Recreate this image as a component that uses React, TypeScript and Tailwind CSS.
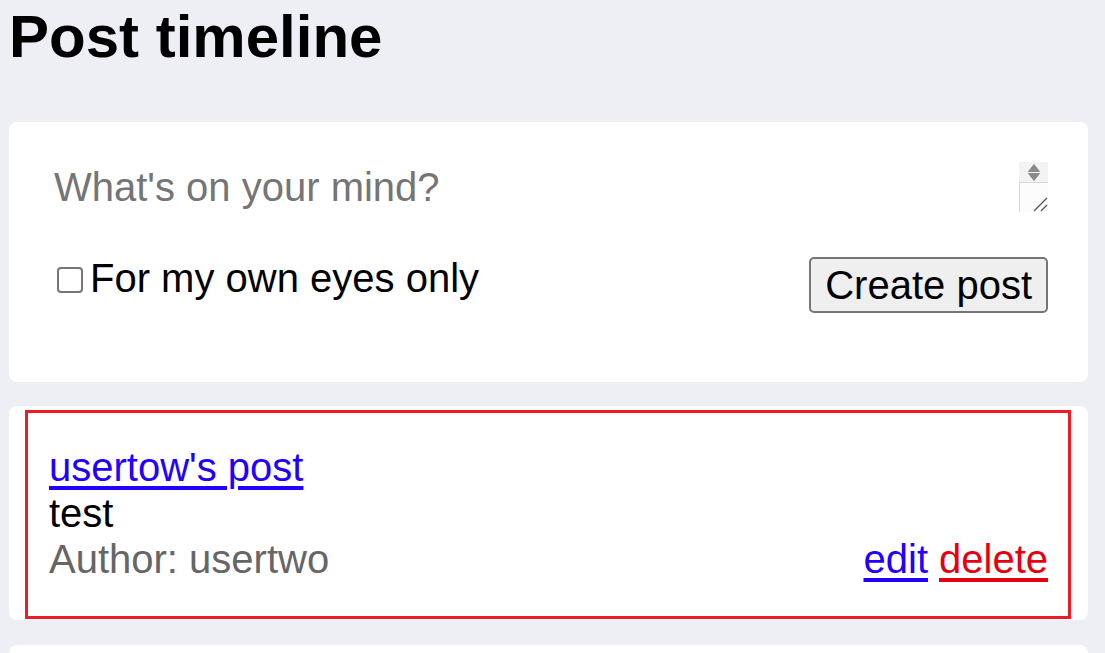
import React from "react";

export default function App() {
  const font = { fontFamily: '"Liberation Sans", Arial, sans-serif' };
  return (
    <div className="h-[653px] w-[1105px] overflow-hidden bg-[#eeeff4] text-black" style={font}>
      <h1 className="ml-[9px] h-[61px] pt-[7px] text-[60px] font-bold leading-none">Post timeline</h1>

      <div className="ml-[9px] mt-[61px] h-[260px] w-[1079px] rounded-[8px] bg-white px-[40px] pt-[40px]">
        <div className="relative h-[50px] w-full">
          <textarea
            placeholder="What's on your mind?"
            className="block h-[50px] w-full resize-none overflow-hidden border-0 bg-transparent px-[5px] pt-[2px] text-[40px] leading-[46px] text-black outline-none placeholder:text-[#757575]"
            style={font}
          />
          <div className="pointer-events-none absolute right-0 top-0 flex h-[50px] w-[29px] flex-col">
            <div className="flex h-[20px] flex-col items-center justify-center gap-[1px] bg-[#f3f3f3]">
              <svg width="12" height="8" viewBox="0 0 12 8">
                <path d="M6 0.5 L11.5 7.5 L0.5 7.5 Z" fill="#8a8a8a" stroke="#8a8a8a" strokeLinejoin="round" />
              </svg>
              <svg width="12" height="8" viewBox="0 0 12 8">
                <path d="M0.5 0.5 L11.5 0.5 L6 7.5 Z" fill="#8a8a8a" stroke="#8a8a8a" strokeLinejoin="round" />
              </svg>
            </div>
            <div className="relative flex-1 border-l border-t border-[#d8d8d8] bg-[#fcfcfc]">
              <svg className="absolute bottom-0 right-0" width="16" height="16" viewBox="0 0 16 16">
                <line x1="2" y1="15" x2="15" y2="2" stroke="#555" strokeWidth="1.3" />
                <line x1="9" y1="15" x2="15" y2="9" stroke="#555" strokeWidth="1.3" />
              </svg>
            </div>
          </div>
        </div>

        <div className="mt-[43px] flex items-start justify-between">
          <label className="flex items-start text-[40px] leading-[46px]">
            <span className="ml-[8px] mt-[12px] mr-[7px] block h-[26px] w-[26px] rounded-[4px] border-[2px] border-[#767676] bg-white" />
            <span>For my own eyes only</span>
          </label>
          <button
            className="mt-[2px] rounded-[5px] border-[2px] border-[#767676] bg-[#efefef] px-[14px] py-[3px] text-[40px] leading-[46px] text-black"
            style={font}
          >
            Create post
          </button>
        </div>
      </div>

      <div className="ml-[9px] mt-[24px] h-[214px] w-[1079px] rounded-[8px] bg-white pl-[16px] pr-[17px] pt-[4px]">
        <div className="h-[209px] border-[3px] border-[#ee1d25] pl-[21px] pr-[20px] pt-[31px]">
          <a href="#" className="block w-fit text-[40px] leading-[46px] text-[#2200ff] underline underline-offset-[5px]">
            usertow's post
          </a>
          <div className="text-[40px] leading-[46px]">test</div>
          <div className="flex items-end justify-between text-[40px] leading-[46px]">
            <span className="text-[#666666]">Author: usertwo</span>
            <span className="flex gap-[11px]">
              <a href="#" className="text-[#2200ff] underline underline-offset-[5px]">edit</a>
              <a href="#" className="text-[#e6000f] underline underline-offset-[5px]">delete</a>
            </span>
          </div>
        </div>
      </div>

      <div className="ml-[9px] mt-[25px] h-[100px] w-[1079px] rounded-[8px] bg-white" />
    </div>
  );
}
